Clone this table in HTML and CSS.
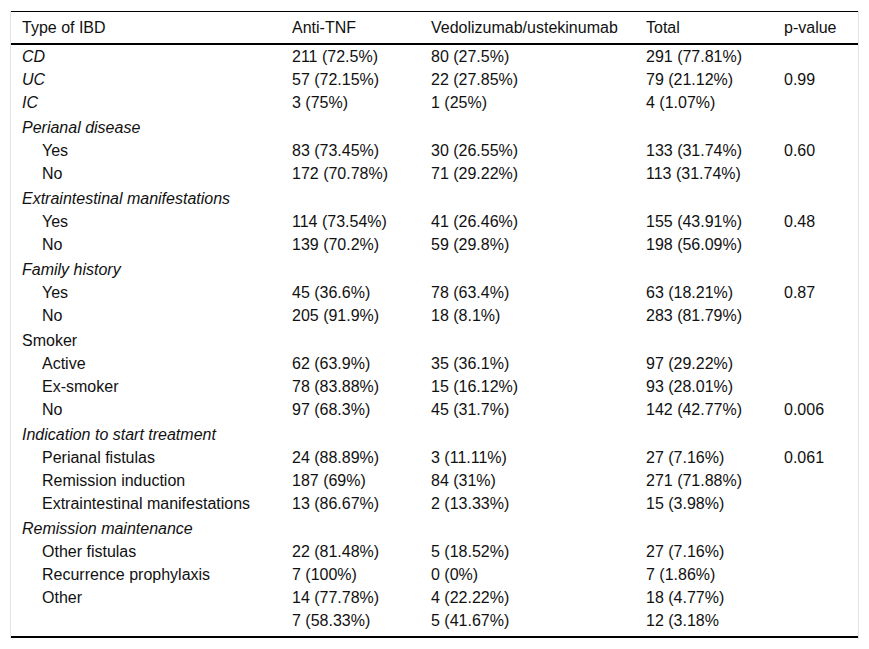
FILE: index.html
```html
<!DOCTYPE html>
<html lang="en">
<head>
<meta charset="utf-8">
<title>Type of IBD table</title>
<link rel="stylesheet" href="styles.css">
</head>
<body>
<div class="frame">
<table class="data">
<colgroup>
<col class="c1"><col class="c2"><col class="c3"><col class="c4"><col class="c5">
</colgroup>
<thead>
<tr><th>Type of IBD</th><th>Anti-TNF</th><th>Vedolizumab/ustekinumab</th><th>Total</th><th>p-value</th></tr>
</thead>
<tbody>
<tr class="first"><td><em>CD</em></td><td>211 (72.5%)</td><td>80 (27.5%)</td><td>291 (77.81%)</td><td></td></tr>
<tr><td><em>UC</em></td><td>57 (72.15%)</td><td>22 (27.85%)</td><td>79 (21.12%)</td><td>0.99</td></tr>
<tr><td><em>IC</em></td><td>3 (75%)</td><td>1 (25%)</td><td>4 (1.07%)</td><td></td></tr>
<tr class="group"><td colspan="5"><em>Perianal disease</em></td></tr>
<tr><td class="ind">Yes</td><td>83 (73.45%)</td><td>30 (26.55%)</td><td>133 (31.74%)</td><td>0.60</td></tr>
<tr><td class="ind">No</td><td>172 (70.78%)</td><td>71 (29.22%)</td><td>113 (31.74%)</td><td></td></tr>
<tr class="group"><td colspan="5"><em>Extraintestinal manifestations</em></td></tr>
<tr><td class="ind">Yes</td><td>114 (73.54%)</td><td>41 (26.46%)</td><td>155 (43.91%)</td><td>0.48</td></tr>
<tr><td class="ind">No</td><td>139 (70.2%)</td><td>59 (29.8%)</td><td>198 (56.09%)</td><td></td></tr>
<tr class="group"><td colspan="5"><em>Family history</em></td></tr>
<tr><td class="ind">Yes</td><td>45 (36.6%)</td><td>78 (63.4%)</td><td>63 (18.21%)</td><td>0.87</td></tr>
<tr><td class="ind">No</td><td>205 (91.9%)</td><td>18 (8.1%)</td><td>283 (81.79%)</td><td></td></tr>
<tr class="group"><td colspan="5">Smoker</td></tr>
<tr><td class="ind">Active</td><td>62 (63.9%)</td><td>35 (36.1%)</td><td>97 (29.22%)</td><td></td></tr>
<tr><td class="ind">Ex-smoker</td><td>78 (83.88%)</td><td>15 (16.12%)</td><td>93 (28.01%)</td><td></td></tr>
<tr><td class="ind">No</td><td>97 (68.3%)</td><td>45 (31.7%)</td><td>142 (42.77%)</td><td>0.006</td></tr>
<tr class="group"><td colspan="5"><em>Indication to start treatment</em></td></tr>
<tr><td class="ind">Perianal fistulas</td><td>24 (88.89%)</td><td>3 (11.11%)</td><td>27 (7.16%)</td><td>0.061</td></tr>
<tr><td class="ind">Remission induction</td><td>187 (69%)</td><td>84 (31%)</td><td>271 (71.88%)</td><td></td></tr>
<tr><td class="ind">Extraintestinal manifestations</td><td>13 (86.67%)</td><td>2 (13.33%)</td><td>15 (3.98%)</td><td></td></tr>
<tr class="group"><td colspan="5"><em>Remission maintenance</em></td></tr>
<tr><td class="ind">Other fistulas</td><td>22 (81.48%)</td><td>5 (18.52%)</td><td>27 (7.16%)</td><td></td></tr>
<tr><td class="ind">Recurrence prophylaxis</td><td>7 (100%)</td><td>0 (0%)</td><td>7 (1.86%)</td><td></td></tr>
<tr><td class="ind">Other</td><td>14 (77.78%)</td><td>4 (22.22%)</td><td>18 (4.77%)</td><td></td></tr>
<tr class="last"><td></td><td>7 (58.33%)</td><td>5 (41.67%)</td><td>12 (3.18%</td><td></td></tr>
</tbody>
</table>
</div>
</body>
</html>
```

FILE: styles.css
```css
html, body {
  margin: 0;
  padding: 0;
  background: #ffffff;
}

body {
  font-family: "Liberation Sans", Arial, sans-serif;
  font-size: 16px;
  color: #111111;
}

.frame {
  width: 847px;
  margin: 11px 0 0 10px;
  padding-bottom: 1px;
  border-left: 1px solid #e3e3e3;
  border-right: 1px solid #e3e3e3;
}

.data {
  width: 847px;
  border-collapse: collapse;
  table-layout: fixed;
  border-top: 1px solid #000000;
  border-bottom: 2px solid #000000;
}

.c1 { width: 270px; }
.c2 { width: 139px; }
.c3 { width: 215px; }
.c4 { width: 138px; }
.c5 { width: 85px; }

.data th {
  font-weight: normal;
  text-align: left;
  line-height: 18px;
  padding: 7px 11px 6px;
  border-bottom: 2px solid #000000;
  white-space: nowrap;
}

.data td {
  line-height: 18px;
  padding: 3px 11px 2px;
  text-align: left;
  white-space: nowrap;
  vertical-align: top;
}

.data tr.group td {
  padding-top: 5px;
}

.data tr.last td {
  padding-bottom: 6px;
}

.data td.ind {
  padding-left: 31px;
}

.data em {
  font-style: italic;
}
```
